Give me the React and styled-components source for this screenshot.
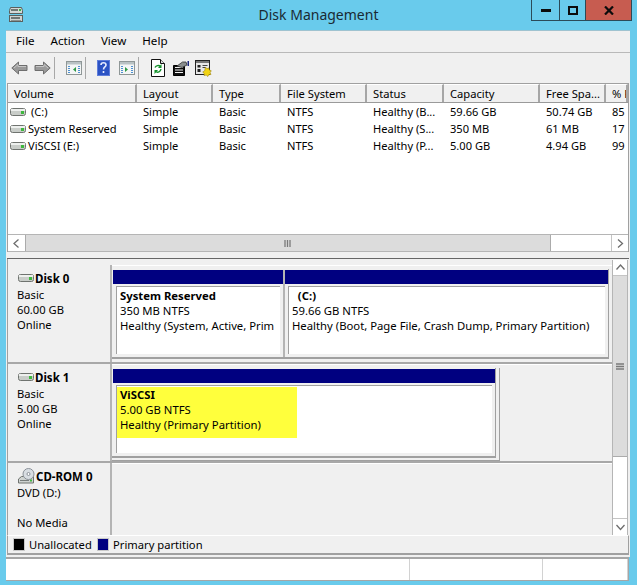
import React from "react";
import styled, { createGlobalStyle } from "styled-components";

const GlobalStyle = createGlobalStyle`
  html, body {
    margin: 0;
    padding: 0;
    background: #69cbec;
    overflow: hidden;
  }
  * { box-sizing: border-box; }
`;

const Win = styled.div`
  width: 637px;
  height: 585px;
  background: #69cbec;
  color: #000;
  font-family: "Noto Sans", "Open Sans", sans-serif;
  font-size: 11.2px;
  line-height: 15px;
`;

const TitleBar = styled.div`
  height: 30px;
  display: grid;
  grid-template-columns: 1fr auto 1fr;
  color: #1a2a33;
`;

const TitleIcon = styled.div`
  padding: 7px 0 0 8px;
`;

const Title = styled.div`
  font-size: 14px;
  line-height: 30px;
`;

const WinButtons = styled.div`
  display: flex;
  justify-content: flex-end;
  align-items: flex-start;
  padding-right: 5px;
`;

const WinButton = styled.div`
  width: ${(p) => p.$w}px;
  height: 21px;
  display: flex;
  align-items: center;
  justify-content: center;
  background: ${(p) => (p.$close ? "#c75c50" : "transparent")};
  border: 1px solid #2b4a58;
  border-top: 0;
  border-left-width: ${(p) => (p.$first ? 1 : 0)}px;
`;

const Client = styled.div`
  margin-left: 6px;
  width: 624px;
  height: 527px;
  background: #f0f0f0;
  border-top: 1px solid #9fc3d0;
  display: flex;
  flex-direction: column;
`;

const MenuBar = styled.div`
  height: 22px;
  flex: none;
  display: flex;
  gap: 16px;
  padding: 1px 0 0 10px;
  border-bottom: 1px solid #b9b9b9;
  font-size: 11.6px;
  line-height: 17px;
`;

const Toolbar = styled.div`
  height: 30px;
  flex: none;
  display: flex;
  align-items: center;
  padding-left: 2px;
`;

const ToolButton = styled.div`
  width: 23px;
  height: 22px;
  display: flex;
  align-items: center;
  justify-content: center;
`;

const ToolSep = styled.div`
  width: 1px;
  height: 22px;
  background: #a8a8a8;
  margin-right: ${(p) => p.$after}px;
`;

const ListPane = styled.div`
  margin-left: 1px;
  width: 622px;
  height: 169px;
  flex: none;
  background: #fff;
  border: 1px solid #a0a0a0;
  border-bottom: 0;
  display: flex;
  flex-direction: column;
`;

const HeaderRow = styled.div`
  height: 19px;
  flex: none;
  display: flex;
  border-bottom: 1px solid #9a9a9a;
`;

const HeaderCell = styled.div`
  width: ${(p) => p.$w}px;
  flex: none;
  padding: 1px 0 0 6px;
  background: #f0f0f0;
  border-right: 2px solid #a6a6a6;
  border-top: 1px solid #fff;
  white-space: nowrap;
  overflow: hidden;
`;

const ListBody = styled.div`
  flex: 1;
`;

const Row = styled.div`
  height: 17px;
  display: flex;
  align-items: center;
`;

const Cell = styled.div`
  width: ${(p) => p.$w}px;
  flex: none;
  padding-left: 6px;
  white-space: pre;
  overflow: hidden;
  font-size: 11.1px;
`;

const VolumeCell = styled(Cell)`
  display: flex;
  align-items: center;
  padding-left: 2px;
  gap: 2px;
`;

const HScroll = styled.div`
  height: 18px;
  flex: none;
  display: flex;
  border-top: 1px solid #b5b5b5;
  border-bottom: 1px solid #b5b5b5;
`;

const ScrollBtn = styled.div`
  width: ${(p) => p.$w || 17}px;
  height: ${(p) => p.$h || 16}px;
  flex: none;
  display: flex;
  align-items: center;
  justify-content: center;
  background: #fff;
  border: 0 solid #c4c4c4;
  border-width: ${(p) => p.$edges || "0"};
`;

const HThumb = styled.div`
  width: 526px;
  flex: none;
  background: #dcdcdc;
  border-right: 1px solid #ababab;
  border-left: 1px solid #ababab;
  display: flex;
  align-items: center;
  justify-content: center;
`;

const Track = styled.div`
  flex: 1;
  background: #fff;
`;

const Splitter = styled.div`
  height: 7px;
  flex: none;
  margin-left: 1px;
  width: 622px;
  border-bottom: 1px solid #666;
  background: #f0f0f0;
`;

const LowerPane = styled.div`
  margin-left: 1px;
  width: 622px;
  height: 276px;
  flex: none;
  display: flex;
  border-left: 1px solid #a0a0a0;
`;

const Disks = styled.div`
  width: 604px;
  flex: none;
  display: flex;
  flex-direction: column;
  padding-top: 6px;
`;

const DiskRow = styled.div`
  height: ${(p) => p.$h}px;
  flex: none;
  display: flex;
  border-bottom: ${(p) => (p.$last ? 0 : "2px solid #a8a8a8")};
`;

const DiskInfo = styled.div`
  width: 104px;
  flex: none;
  padding: 6px 0 0 9px;
  border-right: 2px solid #b4b4b4;
`;

const DiskName = styled.div`
  height: 14px;
  margin: 0 0 2px 1px;
  display: flex;
  align-items: center;
  gap: 1px;
  font-weight: 700;
  font-size: 11.5px;
`;

const DiskMap = styled.div`
  flex: 1;
  padding-top: 3px;
  border-top: 1px solid #fff;
`;

const OuterBox = styled.div`
  width: 388px;
  height: 93px;
  border-right: 1px solid #a0a0a0;
  border-bottom: 1px solid #a0a0a0;
`;

const DiskBox = styled.div`
  width: ${(p) => p.$w}px;
  height: 90px;
  display: flex;
  padding: 1px 0 0 1px;
  border-right: 1px solid #a0a0a0;
  border-bottom: 2px solid #a0a0a0;
`;

const Partition = styled.div`
  width: ${(p) => p.$w}px;
  flex: none;
  display: flex;
  flex-direction: column;
  border-right: ${(p) => (p.$divider ? "2px solid #b4b4b4" : "0")};
`;

const PartBar = styled.div`
  height: 14px;
  flex: none;
  background: #000080;
`;

const PartFrame = styled.div`
  flex: 1;
  margin: 2px 3px 3px 3px;
  background: #fff;
  border-top: 1px solid #a0a0a0;
  border-left: 1px solid #a0a0a0;
  padding: 1px 0 0 ${(p) => (p.$tight ? 0 : 3)}px;
  white-space: pre;
  overflow: hidden;
  font-size: 11.3px;
`;

const PartName = styled.div`
  font-weight: 700;
`;

const Highlight = styled.div`
  width: 180px;
  height: 51px;
  background: #ffff3c;
  padding: 0 0 0 3px;
`;

const VScroll = styled.div`
  width: 16px;
  flex: none;
  display: flex;
  flex-direction: column;
  margin-top: 1px;
  border-left: 1px solid #b5b5b5;
  border-right: 1px solid #b5b5b5;
`;

const VThumb = styled.div`
  height: 181px;
  flex: none;
  background: #dcdcdc;
  border-bottom: 1px solid #ababab;
  display: flex;
  align-items: center;
  justify-content: center;
`;

const Legend = styled.div`
  margin-left: 1px;
  width: 622px;
  height: 20px;
  flex: none;
  display: flex;
  align-items: center;
  padding: 0 0 1px 5px;
  border-left: 1px solid #a0a0a0;
  border-right: 1px solid #a0a0a0;
  border-top: 1px solid #fff;
  border-bottom: 2px solid #a0a0a0;
`;

const Swatch = styled.div`
  width: 12px;
  height: 13px;
  flex: none;
  background: ${(p) => p.$color};
  border: 1px solid #c8c8c8;
  margin-right: 4px;
`;

const LegendText = styled.span`
  width: ${(p) => p.$w}px;
`;

const StatusBar = styled.div`
  margin-left: 6px;
  width: 623px;
  height: 24px;
  background: #fff;
  display: grid;
  grid-template-columns: 404px 133px 85px 1fr;
  border-top: 2px solid #a6a6a6;
  border-bottom: 1px solid #a6a6a6;
  border-right: 1px solid #a6a6a6;
`;

const StatusCell = styled.div`
  border-right: 1px solid #d2d2d2;
`;

const columns = [129, 76, 68, 86, 77, 96, 66, 22];
const headers = ["Volume", "Layout", "Type", "File System", "Status", "Capacity", "Free Spa...", "% F"];
const volumes = [
  [" (C:)", "Simple", "Basic", "NTFS", "Healthy (B...", "59.66 GB", "50.74 GB", "85"],
  ["System Reserved", "Simple", "Basic", "NTFS", "Healthy (S...", "350 MB", "61 MB", "17"],
  ["ViSCSI (E:)", "Simple", "Basic", "NTFS", "Healthy (P...", "5.00 GB", "4.94 GB", "99"],
];

function DriveIcon() {
  return (
    <svg width="16" height="10" viewBox="0 0 16 10" style={{ flex: "none" }}>
      <rect x="0.5" y="1.5" width="15" height="7" rx="2" fill="#c9cdc9" stroke="#6f736f" />
      <rect x="1" y="2" width="14" height="2" fill="#eef0ee" />
      <rect x="11" y="4" width="3" height="3" fill="#3fb83f" />
    </svg>
  );
}

function AppIcon() {
  return (
    <svg width="16" height="16" viewBox="0 0 16 16">
      <path d="M2.5 .5h11l1 3v3h-13v-3z" fill="#d4d8d6" stroke="#59605e" />
      <rect x="3" y="2" width="7" height="2" fill="#6f7775" />
      <rect x="11" y="2" width="2" height="2" fill="#35b046" />
      <rect x="1.5" y="8.5" width="13" height="6" fill="#cfd3d1" stroke="#59605e" />
      <rect x="3" y="10" width="9" height="2" fill="#6f7775" />
      <rect x="3" y="13" width="10" height="1" fill="#8b9290" />
    </svg>
  );
}

function ArrowIcon({ flip }) {
  return (
    <svg width="17" height="14" viewBox="0 0 17 14" style={flip ? { transform: "scaleX(-1)" } : undefined}>
      <path d="M.8 7 7.5 1v3.5H16v5H7.5V13z" fill="#9a9a9a" stroke="#6e6e6e" />
      <path d="M3 7 7 3.5v2h8" fill="none" stroke="#c6c6c6" />
    </svg>
  );
}

function PaneIcon({ right }) {
  return (
    <svg width="16" height="14" viewBox="0 0 16 14">
      <rect x=".5" y=".5" width="15" height="13" fill="#f4f6f6" stroke="#8f9797" />
      <rect x="1" y="1" width="14" height="2.5" fill="#b9c2c4" />
      <path d={right ? "M6 6v5l3-2.5z" : "M10 6v5L7 8.500z"} fill="#2e9a45" />
      <path d="M2 5.500h2M2 7.500h2M2 9.500h2M2 11.500h2M12 5.500h2M12 7.500h2M12 9.500h2M12 11.500h2" stroke="#4d8fd0" />
    </svg>
  );
}

function HelpIcon() {
  return (
    <svg width="13" height="16" viewBox="0 0 13 16">
      <rect width="13" height="16" fill="#2b52c4" />
      <rect x=".5" y=".5" width="12" height="15" fill="none" stroke="#5f7ddb" />
      <path d="M4 5c0-3 5-3 5 0 0 2-2.500 2-2.500 4.500M6.500 11v2" fill="none" stroke="#e6ebff" strokeWidth="1.600" />
    </svg>
  );
}

function RefreshIcon() {
  return (
    <svg width="14" height="18" viewBox="0 0 14 18">
      <path d="M.5.5h9l4 4v13H.5z" fill="#fff" stroke="#111" />
      <path d="M9.500.5v4h4" fill="#ddd" stroke="#111" />
      <path d="M4 8.500a3.500 3.500 0 0 1 5.500-1M10 10a3.500 3.500 0 0 1-5.500 2.500" fill="none" stroke="#12912b" strokeWidth="1.400" />
      <path d="M10.500 5v4h-3.500zM3.500 15v-4h3.500z" fill="#12912b" />
    </svg>
  );
}

function PropsIcon() {
  return (
    <svg width="16" height="15" viewBox="0 0 16 15">
      <path d="M.5 4.500h9l2-2v12H.5z" fill="#111" stroke="#000" />
      <path d="M2 6.500h8M2 9h8M2 11.500h8" stroke="#f2f2f2" />
      <path d="M4 5 9.500 1h3.500l1 3-5 2.500z" fill="#8a8f8f" stroke="#333" strokeWidth=".8" />
      <rect x="14.500" y="0" width="1.500" height="5" fill="#1d2b80" />
    </svg>
  );
}

function ConfigIcon() {
  return (
    <svg width="17" height="17" viewBox="0 0 17 17">
      <rect x=".5" y=".5" width="14" height="14" fill="#e8e8e8" stroke="#222" />
      <rect x="1" y="1" width="13" height="2" fill="#777" />
      <path d="M2.500 5h3v2.500h-3zM2.500 9h3v3h-3z" fill="#222" />
      <path d="M7.500 5.500h5M7.500 7.500h3" stroke="#444" />
      <path d="M10.500 7l1.400 1.800 2-.9.400 2 2 .9-1.200 1.700.9 2-2.200.2-1 1.800-1.600-1.400-2.100.5.100-2.200-1.500-1.400 1.900-1.100z" fill="#f2d414" stroke="#8a7300" strokeWidth=".5" />
    </svg>
  );
}

function CdIcon() {
  return (
    <svg width="17" height="17" viewBox="0 0 17 17" style={{ flex: "none" }}>
      <path d="M0.500 11 3.500 8.500h12V15h-15z" fill="#cfd3d1" stroke="#6f736f" />
      <circle cx="10.500" cy="6" r="5.500" fill="#d8dde2" stroke="#8a9098" />
      <circle cx="10.500" cy="6" r="1.500" fill="#fff" stroke="#8a9098" />
      <rect x="2" y="12" width="9" height="1" fill="#787d7b" />
      <rect x="12" y="11.500" width="2" height="2" fill="#3fb83f" />
    </svg>
  );
}

function Chevron({ dir }) {
  const paths = {
    left: "M5.500 .5 1 4.500l4.500 4",
    right: "M1 .5l4.500 4-4.500 4",
    up: "M.5 5.500 4.500 1l4 4.500",
    down: "M.5 1l4 4.500 4-4.500",
  };
  const flat = dir === "up" || dir === "down";
  return (
    <svg width={flat ? 9 : 7} height={flat ? 7 : 9} viewBox={flat ? "0 0 9 7" : "0 0 7 9"}>
      <path d={paths[dir]} fill="none" stroke="#6d6d6d" strokeWidth="1.300" />
    </svg>
  );
}

function Grip({ vertical }) {
  return (
    <svg width="8" height="7" viewBox="0 0 8 7">
      {vertical ? (
        <path d="M0 1h8M0 3.500h8M0 6h8" stroke="#7a7a7a" strokeWidth="1.300" />
      ) : (
        <path d="M1 0v7M3.500 0v7M6 0v7" stroke="#7a7a7a" strokeWidth="1.300" />
      )}
    </svg>
  );
}

export default function App() {
  return (
    <Win>
      <GlobalStyle />
      <TitleBar>
        <TitleIcon>
          <AppIcon />
        </TitleIcon>
        <Title>Disk Management</Title>
        <WinButtons>
          <WinButton $w={29} $first>
            <svg width="10" height="4" viewBox="0 0 10 4"><rect y="1" width="10" height="3" fill="#0c0c0c" /></svg>
          </WinButton>
          <WinButton $w={26}>
            <svg width="10" height="9" viewBox="0 0 10 9"><rect x="1" y="1" width="8" height="7" fill="none" stroke="#0c0c0c" strokeWidth="2" /></svg>
          </WinButton>
          <WinButton $w={46} $close>
            <svg width="10" height="9" viewBox="0 0 10 9"><path d="M1 .5l8 8M9 .5l-8 8" stroke="#0c0c0c" strokeWidth="2.200" /></svg>
          </WinButton>
        </WinButtons>
      </TitleBar>

      <Client>
        <MenuBar>
          <span>File</span>
          <span>Action</span>
          <span>View</span>
          <span>Help</span>
        </MenuBar>

        <Toolbar>
          <ToolButton><ArrowIcon /></ToolButton>
          <ToolButton><ArrowIcon flip /></ToolButton>
          <ToolSep $after={7} />
          <ToolButton><PaneIcon /></ToolButton>
          <ToolSep $after={6} />
          <ToolButton><HelpIcon /></ToolButton>
          <ToolButton><PaneIcon right /></ToolButton>
          <ToolSep $after={7} />
          <ToolButton><RefreshIcon /></ToolButton>
          <ToolButton><PropsIcon /></ToolButton>
          <ToolButton><ConfigIcon /></ToolButton>
        </Toolbar>

        <ListPane>
          <HeaderRow>
            {headers.map((h, i) => (
              <HeaderCell key={h} $w={columns[i]}>{h}</HeaderCell>
            ))}
          </HeaderRow>
          <ListBody>
            {volumes.map((v) => (
              <Row key={v[0]}>
                <VolumeCell $w={columns[0]}>
                  <DriveIcon />
                  {v[0]}
                </VolumeCell>
                {v.slice(1).map((text, i) => (
                  <Cell key={i} $w={columns[i + 1]}>{text}</Cell>
                ))}
              </Row>
            ))}
          </ListBody>
          <HScroll>
            <ScrollBtn><Chevron dir="left" /></ScrollBtn>
            <HThumb><Grip /></HThumb>
            <Track />
            <ScrollBtn $edges="0 0 0 1px"><Chevron dir="right" /></ScrollBtn>
          </HScroll>
        </ListPane>
        <Splitter />

        <LowerPane>
          <Disks>
            <DiskRow $h={99}>
              <DiskInfo>
                <DiskName><DriveIcon />Disk 0</DiskName>
                <div>Basic</div>
                <div>60.00 GB</div>
                <div>Online</div>
              </DiskInfo>
              <DiskMap>
                <DiskBox $w={497}>
                  <Partition $w={172} $divider>
                    <PartBar />
                    <PartFrame>
                      <PartName>System Reserved</PartName>
                      <div>350 MB NTFS</div>
                      <div>Healthy (System, Active, Prim</div>
                    </PartFrame>
                  </Partition>
                  <Partition $w={323}>
                    <PartBar />
                    <PartFrame>
                      <PartName>{"  (C:)"}</PartName>
                      <div>59.66 GB NTFS</div>
                      <div>Healthy (Boot, Page File, Crash Dump, Primary Partition)</div>
                    </PartFrame>
                  </Partition>
                </DiskBox>
              </DiskMap>
            </DiskRow>

            <DiskRow $h={99}>
              <DiskInfo>
                <DiskName><DriveIcon />Disk 1</DiskName>
                <div>Basic</div>
                <div>5.00 GB</div>
                <div>Online</div>
              </DiskInfo>
              <DiskMap>
                <OuterBox>
                  <DiskBox $w={384}>
                    <Partition $w={382}>
                      <PartBar />
                      <PartFrame $tight>
                        <Highlight>
                          <PartName>ViSCSI</PartName>
                          <div>5.00 GB NTFS</div>
                          <div>Healthy (Primary Partition)</div>
                        </Highlight>
                      </PartFrame>
                    </Partition>
                  </DiskBox>
                </OuterBox>
              </DiskMap>
            </DiskRow>

            <DiskRow $h={72} $last>
              <DiskInfo>
                <DiskName><CdIcon />CD-ROM 0</DiskName>
                <div>DVD (D:)</div>
                <div>&nbsp;</div>
                <div>No Media</div>
              </DiskInfo>
              <DiskMap />
            </DiskRow>
          </Disks>
          <VScroll>
            <ScrollBtn $w={14} $edges="0 0 1px 0"><Chevron dir="up" /></ScrollBtn>
            <VThumb><Grip vertical /></VThumb>
            <Track />
            <ScrollBtn $w={14} $h={17} $edges="1px 0 0 0"><Chevron dir="down" /></ScrollBtn>
          </VScroll>
        </LowerPane>

        <Legend>
          <Swatch $color="#000" />
          <LegendText $w={68}>Unallocated</LegendText>
          <Swatch $color="#000080" />
          <LegendText>Primary partition</LegendText>
        </Legend>
      </Client>

      <StatusBar>
        <StatusCell />
        <StatusCell />
        <StatusCell />
        <div />
      </StatusBar>
    </Win>
  );
}
